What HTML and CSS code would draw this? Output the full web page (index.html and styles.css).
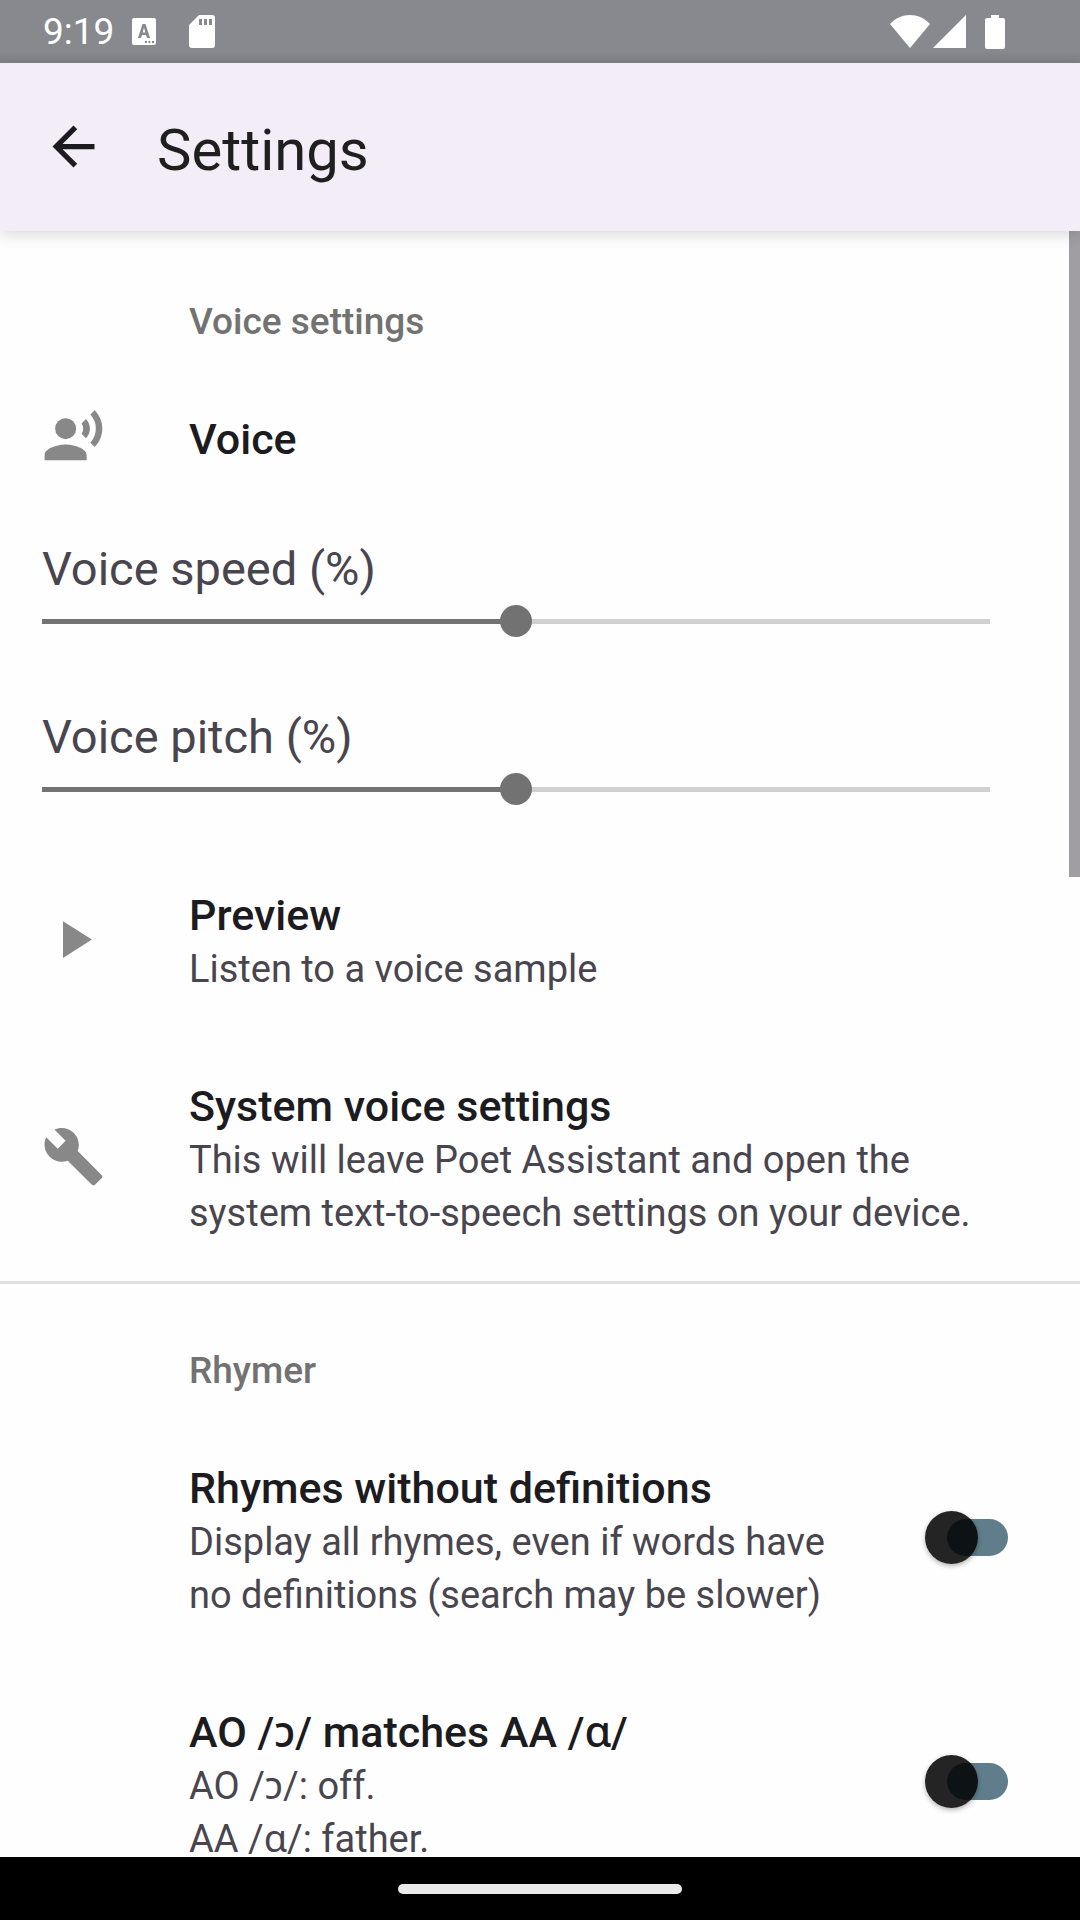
FILE: index.html
```html
<!DOCTYPE html>
<html lang="en">
<head>
<meta charset="utf-8">
<meta name="viewport" content="width=device-width, initial-scale=1">
<title>Settings</title>
<link rel="stylesheet" href="styles.css">
</head>
<body>
<div class="status-bar">
  <div class="status-left">
    <span class="clock">9:19</span>
    <svg class="keyboard-icon" viewBox="0 0 24 27" aria-hidden="true"><path fill-rule="evenodd" d="M2 0h20a2 2 0 0 1 2 2v23a2 2 0 0 1-2 2H2a2 2 0 0 1-2-2V2a2 2 0 0 1 2-2zM10.500 6L6 20h3l1-3h4l1 3h3L13.500 6zM12 9.500l1.300 5h-2.600zM13 23v2h2v-2zM16.500 23v2h2v-2zM20 23v2h2v-2z"/></svg>
    <svg class="card-icon" viewBox="0 0 26 33" aria-hidden="true"><path fill-rule="evenodd" d="M10 0h13a3 3 0 0 1 3 3v27a3 3 0 0 1-3 3H3a3 3 0 0 1-3-3V10zM10 4v6h3V4zM15 4v6h3V4zM20 4v6h3V4z"/></svg>
  </div>
  <div class="status-right">
    <svg class="wifi-icon" viewBox="0 0 40 33" aria-hidden="true"><path d="M0 9C11-3 29-3 40 9L20 33z"/></svg>
    <svg class="signal-icon" viewBox="0 0 33 33" aria-hidden="true"><path d="M33 0v33H0z"/></svg>
    <svg class="battery-icon" viewBox="0 0 20 34" aria-hidden="true"><path d="M6 0h8v3h4a2 2 0 0 1 2 2v27a2 2 0 0 1-2 2H2a2 2 0 0 1-2-2V5a2 2 0 0 1 2-2h4z"/></svg>
  </div>
</div>
<header class="app-bar">
  <button class="back" type="button" aria-label="Back">
    <svg class="icon" viewBox="0 0 24 24" aria-hidden="true"><path d="M20 11H7.830l5.590-5.590L12 4l-8 8 8 8 1.410-1.410L7.830 13H20z"/></svg>
  </button>
  <h1 class="app-title">Settings</h1>
</header>
<main class="content">
  <section class="group">
    <h2 class="category">Voice settings</h2>
    <div class="row">
      <svg class="icon row-icon" viewBox="0 0 24 24" aria-hidden="true"><circle cx="9" cy="9" r="4"/><path d="M9 15c-2.670 0-8 1.340-8 4v2h16v-2c0-2.660-5.330-4-8-4zM16.760 5.360l-1.680 1.690c.84 1.180.84 2.710 0 3.890l1.680 1.690c2.020-2.020 2.020-5.070 0-7.270zM20.070 2l-1.630 1.630c2.770 3.020 2.770 7.560 0 10.740L20.070 16c3.900-3.890 3.910-9.950 0-14z"/></svg>
      <div class="text"><h3 class="title">Voice</h3></div>
    </div>
    <div class="sliders">
      <div class="slider-row">
        <label class="slider-label" for="speed">Voice speed (%)</label>
        <input class="slider" id="speed" type="range" min="0" max="200" value="100">
      </div>
      <div class="slider-row">
        <label class="slider-label" for="pitch">Voice pitch (%)</label>
        <input class="slider" id="pitch" type="range" min="0" max="200" value="100">
      </div>
    </div>
    <div class="row">
      <svg class="icon row-icon" viewBox="0 0 24 24" aria-hidden="true"><path d="M8 5v14l11-7z"/></svg>
      <div class="text">
        <h3 class="title">Preview</h3>
        <p class="summary">Listen to a voice sample</p>
      </div>
    </div>
    <div class="row">
      <svg class="icon row-icon" viewBox="0 0 24 24" aria-hidden="true"><path d="M22.700 19l-9.100-9.100c.9-2.300.4-5-1.500-6.900-2-2-5-2.400-7.400-1.300L9 6 6 9 1.600 4.700C.4 7.100.9 10.100 2.900 12.100c1.900 1.900 4.600 2.400 6.900 1.500l9.100 9.100c.4.4 1 .4 1.400 0l2.300-2.300c.5-.4.5-1.100.1-1.400z"/></svg>
      <div class="text">
        <h3 class="title">System voice settings</h3>
        <p class="summary">This will leave Poet Assistant and open the system text-to-speech settings on your device.</p>
      </div>
    </div>
  </section>
  <section class="group">
    <h2 class="category">Rhymer</h2>
    <div class="row row-switch">
      <div class="text">
        <h3 class="title"><label for="undefined-rhymes">Rhymes without definitions</label></h3>
        <p class="summary">Display all rhymes, even if words have no definitions (search may be slower)</p>
      </div>
      <input class="switch" id="undefined-rhymes" type="checkbox" role="switch">
    </div>
    <div class="row row-switch">
      <div class="text">
        <h3 class="title"><label for="ao-aa">AO /ɔ/ matches AA /ɑ/</label></h3>
        <p class="summary">AO /ɔ/: off.<br>AA /ɑ/: father.</p>
      </div>
      <input class="switch" id="ao-aa" type="checkbox" role="switch">
    </div>
  </section>
  <div class="scrollbar"></div>
</main>
<nav class="nav-bar"><div class="nav-handle"></div></nav>
</body>
</html>
```

FILE: styles.css
```css
* {
  box-sizing: border-box;
}

body {
  margin: 0;
  height: 100vh;
  display: flex;
  flex-direction: column;
  overflow: hidden;
  background: #fefefe;
  color: #1c1b1f;
  font-family: Roboto, "Noto Sans", sans-serif;
}

h1, h2, h3, p {
  margin: 0;
}

.status-bar {
  display: flex;
  flex: none;
  justify-content: space-between;
  height: 63px;
  padding: 0 75px 0 43px;
  background: linear-gradient(#88898e 80%, #808186);
  color: #fff;
  fill: #fff;
}

.status-left,
.status-right {
  display: flex;
  align-items: center;
}

.clock {
  font-size: 37px;
  line-height: 62px;
}

.keyboard-icon {
  width: 24px;
  height: 27px;
  margin-left: 18px;
}

.card-icon {
  width: 26px;
  height: 33px;
  margin-left: 33px;
}

.wifi-icon {
  width: 40px;
  height: 33px;
}

.signal-icon {
  width: 33px;
  height: 33px;
  margin-left: 3px;
}

.battery-icon {
  width: 20px;
  height: 34px;
  margin-left: 19px;
}

.app-bar {
  display: flex;
  flex: none;
  align-items: center;
  height: 168px;
  padding: 0 42px;
  gap: 52px;
  background: #f2edf7;
  box-shadow: 0 4px 14px rgba(0, 0, 0, 0.14);
  z-index: 1;
}

.back {
  display: flex;
  padding: 0 0 2px;
  border: 0;
  background: none;
  fill: #1c1b1f;
}

.icon {
  display: block;
  flex: none;
  width: 63px;
  height: 63px;
}

.app-title {
  padding-top: 6px;
  color: #1f1f1f;
  font-size: 58px;
  font-weight: 400;
  line-height: 68px;
}

.content {
  position: relative;
  flex: 1;
  min-height: 0;
  padding-top: 4px;
  overflow: hidden;
}

.group + .group {
  border-top: 3px solid #dfdfdf;
}

.category {
  padding: 60px 90px 22px 189px;
  color: #727272;
  font-size: 37px;
  font-weight: 500;
  line-height: 53px;
}

.row {
  display: grid;
  grid-template-columns: 63px 1fr;
  column-gap: 84px;
  align-items: center;
  padding: 34px 90px 33px 42px;
}

.row-icon {
  height: 69px;
  padding-bottom: 6px;
  fill: #888;
}

.text {
  padding: 8px 0;
}

.title {
  font-size: 43px;
  font-weight: 500;
  line-height: 54px;
}

.summary {
  padding-top: 1px;
  color: #49454f;
  font-size: 38px;
  line-height: 53px;
}

.row-switch {
  grid-template-columns: 1fr 83px;
  padding-left: 189px;
  padding-right: 72px;
}

.sliders {
  padding-bottom: 3px;
}

.slider-row {
  padding: 34px 90px 38px 42px;
}

.slider-label {
  display: block;
  color: #49454f;
  font-size: 47px;
  line-height: 56px;
}

.slider {
  display: block;
  appearance: none;
  width: 100%;
  height: 32px;
  margin: 8px 0 0;
  background: linear-gradient(90deg, #727272 50%, #d0d0d0 50%) center / 100% 5px no-repeat;
}

.slider::-webkit-slider-thumb {
  appearance: none;
  width: 32px;
  height: 32px;
  border-radius: 50%;
  background: #727272;
}

.switch {
  position: relative;
  appearance: none;
  width: 83px;
  height: 53px;
  margin: 0 0 8px;
}

.switch::before {
  content: "";
  position: absolute;
  top: 8px;
  left: 22px;
  width: 61px;
  height: 37px;
  border-radius: 19px;
  background: #607d8b;
}

.switch::after {
  content: "";
  position: absolute;
  top: 0;
  left: 0;
  width: 53px;
  height: 53px;
  border-radius: 50%;
  background: rgba(0, 0, 0, 0.86);
  box-shadow: 0 2px 5px rgba(0, 0, 0, 0.3);
}

.scrollbar {
  position: absolute;
  top: 0;
  right: 0;
  width: 11px;
  height: 646px;
  background: #a09ea3;
}

.nav-bar {
  display: flex;
  flex: none;
  align-items: center;
  justify-content: center;
  height: 63px;
  background: #000;
}

.nav-handle {
  width: 284px;
  height: 10px;
  border-radius: 5px;
  background: #ebebeb;
}
```
